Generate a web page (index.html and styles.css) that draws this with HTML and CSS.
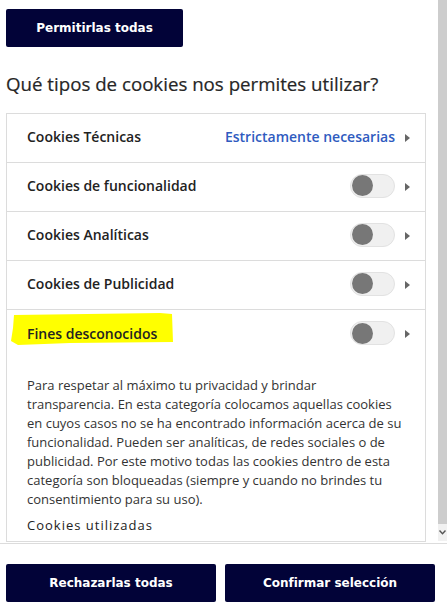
FILE: index.html
```html
<!DOCTYPE html>
<html lang="es">
<head>
<meta charset="utf-8">
<link rel="stylesheet" href="styles.css">
</head>
<body>
<div class="scroll">
  <div class="content">
    <button class="btn btn-top">Permitirlas todas</button>
    <h2 class="heading">Qué tipos de cookies nos permites utilizar?</h2>
    <div class="box">
      <div class="row">
        <span class="title">Cookies Técnicas</span>
        <span class="right"><span class="strict">Estrictamente necesarias</span><span class="arrow"></span></span>
      </div>
      <div class="row">
        <span class="title">Cookies de funcionalidad</span>
        <span class="right"><span class="toggle"><span class="knob"></span></span><span class="arrow"></span></span>
      </div>
      <div class="row">
        <span class="title">Cookies Analíticas</span>
        <span class="right"><span class="toggle"><span class="knob"></span></span><span class="arrow"></span></span>
      </div>
      <div class="row">
        <span class="title">Cookies de Publicidad</span>
        <span class="right"><span class="toggle"><span class="knob"></span></span><span class="arrow"></span></span>
      </div>
      <div class="section">
        <div class="row row-open">
          <span class="title hl-wrap">
            <svg class="highlight" width="164" height="34" viewBox="0 0 164 34"><path d="M4 3 L150 1 L162 2 L163 30 L60 31 L8 33 L1 29 L3 16 Z" fill="#ffff00"/></svg>
            <span class="hl-text">Fines desconocidos</span>
          </span>
          <span class="right"><span class="toggle"><span class="knob"></span></span><span class="arrow"></span></span>
        </div>
        <p class="desc">Para respetar al máximo tu privacidad y brindar transparencia. En esta categoría colocamos aquellas cookies en cuyos casos no se ha encontrado información acerca de su funcionalidad. Pueden ser analíticas, de redes sociales o de publicidad. Por este motivo todas las cookies dentro de esta categoría son bloqueadas (siempre y cuando no brindes tu consentimiento para su uso).</p>
        <div class="used">Cookies utilizadas</div>
      </div>
    </div>
  </div>
  <div class="scrollbar">
    <div class="thumb"></div>
    <div class="sb-arrow"><svg width="7" height="5" viewBox="0 0 7 5"><path d="M0.5 0.5 L3.5 3.8 L6.5 0.5" fill="none" stroke="#555" stroke-width="1.4"/></svg></div>
  </div>
</div>
<div class="footer">
  <button class="btn btn-foot">Rechazarlas todas</button>
  <button class="btn btn-foot">Confirmar selección</button>
</div>
</body>
</html>
```

FILE: styles.css
```css
* { box-sizing: border-box; }
body {
  margin: 0;
  background: #fff;
  font-family: "Open Sans", "DejaVu Sans", sans-serif;
  color: #222;
}
.scroll {
  position: relative;
  height: 543px;
  overflow: hidden;
}
.content {
  padding: 9px 21px 0 6px;
}
.btn {
  display: flex;
  align-items: center;
  justify-content: center;
  background: #020338;
  color: #fff;
  border: none;
  border-radius: 2px;
  font-family: "DejaVu Sans", Verdana, sans-serif;
  font-weight: bold;
  font-size: 12px;
  height: 38px;
  padding: 0 0 1px 0;
}
.btn-top {
  width: 177px;
}
.heading {
  margin: 24px 0 0 0;
  font-size: 18.7px;
  line-height: 26px;
  font-weight: 400;
  color: #262626;
  -webkit-text-stroke: 0.2px #262626;
}
.box {
  margin-top: 16px;
  border: 1px solid #dcdcdc;
  height: 429px;
}
.row {
  display: flex;
  align-items: center;
  justify-content: space-between;
  height: 49px;
  padding: 0 15px 3px 20px;
  border-bottom: 1px solid #dcdcdc;
}
.title {
  font-size: 14px;
  font-weight: 600;
  color: #222;
}
.right {
  display: flex;
  align-items: center;
  gap: 10px;
}
.strict {
  color: #2f5bbf;
  font-size: 14px;
  font-weight: 600;
}
.arrow {
  width: 0;
  height: 0;
  border-top: 4.5px solid transparent;
  border-bottom: 4.5px solid transparent;
  border-left: 5px solid #666;
  margin-top: 2px;
}
.toggle {
  display: flex;
  align-items: center;
  width: 45px;
  height: 24px;
  border-radius: 12px;
  background: #f0f0f0;
  border: 1px solid #e2e2e2;
  padding: 0 1px;
}
.knob {
  width: 21px;
  height: 21px;
  border-radius: 50%;
  background: #777;
}
.row-open {
  border-bottom: none;
}
.hl-wrap {
  position: relative;
}
.highlight {
  position: absolute;
  left: -17px;
  top: -12px;
}
.hl-text {
  position: relative;
}
.desc {
  margin: 17px 0 0 0;
  padding: 0 22px 0 20px;
  font-size: 13px;
  line-height: 19px;
  color: #333;
}
.used {
  margin-top: 7px;
  padding-left: 20px;
  font-size: 13px;
  line-height: 19px;
  letter-spacing: 1px;
  color: #222;
}
.scrollbar {
  position: absolute;
  top: 0;
  right: 0;
  width: 9px;
  height: 541px;
  background: #f1f1f1;
  display: flex;
  flex-direction: column;
}
.thumb {
  height: 524px;
  background: #cdcdcd;
}
.sb-arrow {
  flex: 1;
  display: flex;
  align-items: center;
  justify-content: center;
}
.footer {
  display: flex;
  gap: 9px;
  padding: 20px 12px 0 6px;
  border-top: 1px solid #dcdcdc;
}
.btn-foot {
  width: 210px;
}
```
